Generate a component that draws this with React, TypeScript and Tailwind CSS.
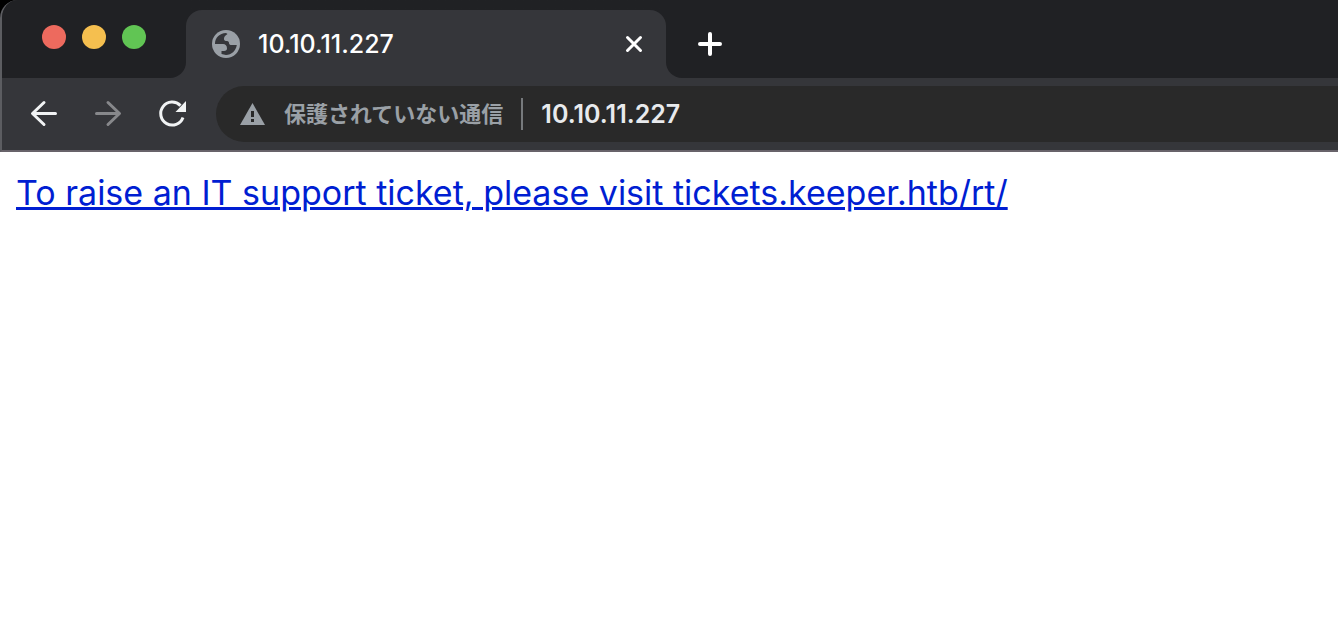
import React from "react";

function Globe() {
  return (
    <svg width="28" height="28" viewBox="0 0 28 28" aria-hidden="true" className="shrink-0">
      <circle cx="14" cy="14" r="14" fill="#9aa0a6" />
      <path d="M3 13.500C3 8 7.500 3.200 14 3L15.500 4C13 5.500 12 7 12 9C12 10.500 13 11 15 11C16.500 11 17 12 17 13C17 14.500 18 15 19.500 15H24.800C23.800 21 19.500 24.800 14 25L9.500 24V21H12C14 21 15 20 15 18.500C15 15.500 13.500 14 11 14H3Z" fill="#35363a" />
    </svg>
  );
}

export default function App() {
  return (
    <div className="min-h-screen bg-white">
      <header className="bg-black">
        <div className="overflow-hidden rounded-tl-[18px] border-b-2 border-l-2 border-b-[#68636a] border-l-[#5c5d61] bg-[#35363a]">
          <div className="flex h-[78px]">
            <div className="flex w-[184px] shrink-0 gap-4 rounded-br-2xl bg-[#202124] pt-[25px] pl-10">
              <button aria-label="閉じる" className="size-6 rounded-full bg-[#ed6a5e]" />
              <button aria-label="最小化" className="size-6 rounded-full bg-[#f5bf4f]" />
              <button aria-label="最大化" className="size-6 rounded-full bg-[#61c554]" />
            </div>
            <div className="w-[480px] bg-linear-to-b from-[#202124] from-50% to-[#35363a] to-50% pt-[10px]">
              <div className="flex h-[68px] items-center rounded-t-2xl bg-[#35363a] pr-5 pl-[26px]">
                <Globe />
                <span className="ml-[18px] flex-1 font-['Inter',sans-serif] text-[25px] leading-8 font-medium text-white">10.10.11.227</span>
                <button aria-label="タブを閉じる" className="flex size-6 items-center justify-center">
                  <svg width="24" height="24" viewBox="0 0 24 24" stroke="#fff" strokeWidth="3" strokeLinecap="round"><path d="M5.500 5.500l13 13M18.500 5.500l-13 13" /></svg>
                </button>
              </div>
            </div>
            <div className="flex flex-1 items-center rounded-bl-2xl bg-[#202124] pt-[10px] pl-8">
              <button aria-label="新しいタブ">
                <svg width="24" height="24" viewBox="0 0 24 24" stroke="#fff" strokeWidth="4" strokeLinecap="round"><path d="M2 12h20M12 2v20" /></svg>
              </button>
            </div>
          </div>
          <div className="flex items-center py-2 pl-7">
            <nav className="flex shrink-0 gap-9">
              <button aria-label="戻る">
                <svg width="28" height="28" viewBox="0 0 28 28" fill="none" stroke="#f1f3f4" strokeWidth="3" strokeLinecap="round" strokeLinejoin="round"><path d="M25.500 13.500H3M14 2.500L2.500 13.500L14 24.500" /></svg>
              </button>
              <button aria-label="進む" disabled>
                <svg width="28" height="28" viewBox="0 0 28 28" fill="none" stroke="#87888b" strokeWidth="3" strokeLinecap="round" strokeLinejoin="round"><path d="M2.500 13.500H25M14 2.500L25.500 13.500L14 24.500" /></svg>
              </button>
              <button aria-label="再読み込み">
                <svg width="28" height="28" viewBox="0 0 28 28" fill="none"><path d="M22.500 5.600A11.500 11.500 0 1 0 25 17.500" stroke="#f1f3f4" strokeWidth="3" /><path d="M28 1V12H17.500Z" fill="#f1f3f4" /></svg>
              </button>
            </nav>
            <div className="ml-[30px] flex h-14 flex-1 items-center rounded-l-full bg-[#292929] pl-6">
              <svg width="26" height="24" viewBox="0 0 26 24" className="shrink-0" aria-hidden="true"><path d="M12.500 1L25 23H0Z" fill="#9aa0a6" /><path d="M11 9h3v6h-3zM11 17h3v3h-3z" fill="#292929" /></svg>
              <label htmlFor="address" className="ml-[18px] shrink-0 border-r-2 border-[#76797c] pr-[18px] pb-1 font-['Noto_Sans_CJK_JP',sans-serif] text-[22px] leading-7 font-bold text-[#9aa0a6]">保護されていない通信</label>
              <input id="address" defaultValue="10.10.11.227" className="ml-[18px] h-8 min-w-0 flex-1 bg-transparent font-['Inter',sans-serif] text-[25px] leading-8 font-semibold text-[#e8eaed] outline-none" />
            </div>
          </div>
        </div>
      </header>
      <main className="px-4 py-4 font-['Inter',sans-serif] text-[34px] leading-[50px] text-[#001ed2]">
        <a href="http://tickets.keeper.htb/rt/" className="underline decoration-[3px] underline-offset-2">To raise an IT support ticket, please visit tickets.keeper.htb/rt/</a>
      </main>
    </div>
  );
}
